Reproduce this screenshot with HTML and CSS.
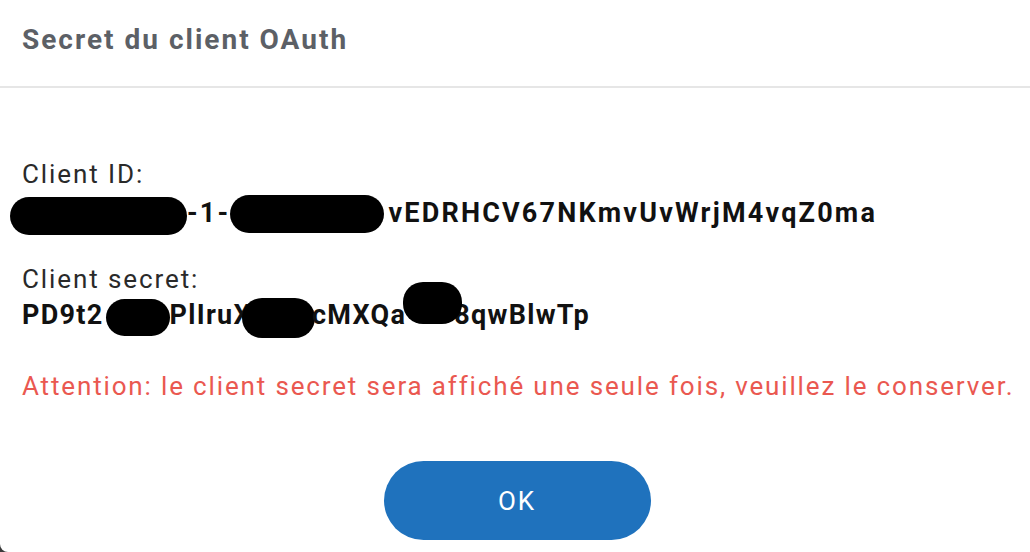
FILE: index.html
```html
<!DOCTYPE html>
<html lang="fr">
<head>
    <meta charset="UTF-8">
    <title>Secret du client OAuth</title>
    <link rel="stylesheet" href="styles.css">
</head>
<body>
    <div class="dialog">
        <div class="dialog-header">
            <h2>Secret du client OAuth</h2>
        </div>

        <div class="dialog-body">
            <div class="field">
                <div class="field-label">Client ID:</div>
                <div class="field-value id-value"><span class="redact r-id1"></span>-1-<span class="redact r-id2"></span>vEDRHCV67NKmvUvWrjM4vqZ0ma</div>
            </div>

            <div class="field">
                <div class="field-label">Client secret:</div>
                <div class="field-value secret-value">PD9t2<span class="redact r-s1"></span>PlIruX<span class="redact r-s2"></span>cMXQa<span class="redact r-s3"></span>8qwBlwTp</div>
            </div>

            <p class="warning">Attention: le client secret sera affiché une seule fois, veuillez le conserver.</p>
        </div>

        <div class="dialog-actions">
            <button class="btn-ok">OK</button>
        </div>
    </div>
</body>
</html>
```

FILE: styles.css
```css
* {
    margin: 0;
    padding: 0;
    box-sizing: border-box;
}

body {
    font-family: Roboto, "Noto Sans", sans-serif;
    background: #3a3a3a;
    width: 1030px;
    height: 552px;
    overflow: hidden;
}

.dialog {
    background: white;
    width: 1030px;
    height: 552px;
    border-radius: 0 0 0 8px;
    color: #222;
}

.dialog-header {
    height: 88px;
    padding: 25px 22px 0;
    border-bottom: 2px solid #e6e6e6;
}

.dialog-header h2 {
    font-size: 28px;
    line-height: 30px;
    font-weight: 700;
    letter-spacing: 2px;
    color: #5c6066;
}

.dialog-body {
    padding: 71px 22px 0;
    font-size: 26px;
    line-height: 30px;
    letter-spacing: 1.9px;
    white-space: nowrap;
}

.field-label {
    color: #2a2a2a;
}

.field-value {
    font-size: 27px;
    font-weight: 700;
    letter-spacing: 2.2px;
    color: #111;
}

.secret-value {
    letter-spacing: 1.3px;
}

.id-value {
    margin-top: 9px;
}

.field + .field {
    margin-top: 36px;
}

.redact {
    display: inline-block;
    background: #000;
    border-radius: 20px;
    vertical-align: baseline;
}

.r-id1 {
    width: 177px;
    height: 38px;
    margin: -4px 0 -13px -12px;
}

.r-id2 {
    width: 154px;
    height: 38px;
    margin: -4px 4px -11px 0;
}

.r-s1 {
    width: 64px;
    height: 37px;
    margin: -4px 0 -12px 2px;
}

.r-s2 {
    width: 73px;
    height: 40px;
    margin: -4px -3px -14px -10px;
}

.r-s3 {
    width: 59px;
    height: 42px;
    margin: -4px -8px -8px -3px;
    transform: translateY(-8px);
}

.warning {
    margin-top: 41px;
    letter-spacing: 1.85px;
    color: #ea5850;
}

.dialog-actions {
    display: flex;
    justify-content: center;
    padding: 60px 0 0 4px;
}

.btn-ok {
    width: 267px;
    height: 79px;
    border: none;
    border-radius: 40px;
    background: #1f72bd;
    color: white;
    font-family: Roboto, sans-serif;
    font-size: 26px;
    letter-spacing: 2px;
    cursor: pointer;
}
```
